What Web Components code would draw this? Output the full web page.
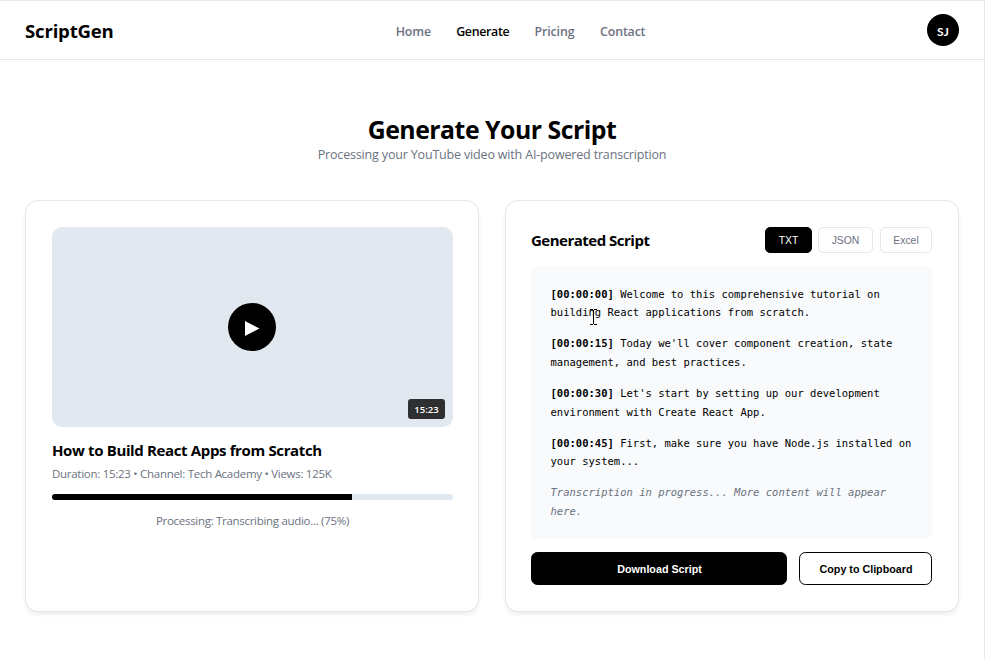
<!DOCTYPE html>
<html lang="en">
<head>
<meta charset="utf-8">
<title>ScriptGen</title>
<style>
html,body{margin:0;height:100%}
body{background:#fff;color:#000;font-family:"Open Sans","Noto Sans",sans-serif;overflow:hidden}
</style>
</head>
<body>
<script-app></script-app>
<script>
const define = (name, html) => customElements.define(name, class extends HTMLElement {
  constructor() {
    super();
    const t = document.createElement('template');
    t.innerHTML = html;
    this.attachShadow({mode: 'open'}).append(t.content.cloneNode(true));
  }
});

define('nav-link', `<style>
:host{display:block;font-size:12.4px;font-weight:600;color:#6b7280;line-height:20px;white-space:nowrap}
:host([active]){color:#000}
</style><slot></slot>`);

define('user-avatar', `<style>
:host{display:flex;align-items:center;justify-content:center;box-sizing:border-box;width:32px;height:32px;padding-top:2px;border-radius:50%;background:#000;color:#fff;font:700 12px Lato,sans-serif}
</style><slot></slot>`);

define('site-header', `<style>
:host{display:flex;justify-content:space-between;align-items:center;box-sizing:border-box;height:59px;padding:0 25px;border-bottom:1px solid #e2e8f0}
.brand{width:189px;font-size:18.6px;font-weight:700;letter-spacing:-.2px;line-height:26px;padding-top:2px}
nav{display:flex;padding-top:4px}
.right{width:132px;display:flex;justify-content:flex-end}
</style>
<div class="brand">ScriptGen</div>
<nav><nav-link style="width:60.5px;letter-spacing:-.1px">Home</nav-link><nav-link active style="width:78.3px;letter-spacing:-.3px">Generate</nav-link><nav-link style="width:65.7px;letter-spacing:-.1px">Pricing</nav-link><nav-link style="letter-spacing:-.17px">Contact</nav-link></nav>
<div class="right"><user-avatar>SJ</user-avatar></div>`);

define('page-heading', `<style>
:host{display:block;text-align:center;padding-top:51px;height:89px}
h1{margin:0;font-size:24.8px;font-weight:700;letter-spacing:-.48px;line-height:36px}
p{margin:-1px 0 0;font-size:12.5px;letter-spacing:-.17px;line-height:18px;color:#6b7280}
</style><h1>Generate Your Script</h1><p>Processing your YouTube video with AI-powered transcription</p>`);

define('panel-card', `<style>
:host{display:block;box-sizing:border-box;height:412px;padding:26px 25px 26px 26px;border:1px solid #e2e8f0;border-radius:13px;background:#fff;box-shadow:0 3px 5px -1px rgba(0,0,0,.09)}
:host([flush-left]){padding:26px 26px 26px 25px}
</style><slot></slot>`);

define('video-thumb', `<style>
:host{display:grid;place-items:center;position:relative;height:200px;border-radius:10px;background:#e2e8f0}
.play{display:grid;place-items:center;width:48px;height:48px;margin-right:1px;border-radius:50%;background:#000}
.time{position:absolute;right:8px;bottom:8px;width:37px;height:20px;border-radius:3px;background:rgba(0,0,0,.8);color:#fff;font-size:9.5px;font-weight:600;line-height:21px;text-align:center}
</style>
<div class="play"><svg width="48" height="48"><path d="M17 18v15l14.5-7.5z" fill="#fff"/></svg></div>
<div class="time"><slot></slot></div>`);

define('progress-bar', `<style>
:host{display:block;height:6px;border-radius:3px;background:#e2e8f0;overflow:hidden}
div{width:300px;height:100%;background:#000}
</style><div></div>`);

define('video-panel', `<style>
h2{margin:12px 0 0;font-size:15px;font-weight:700;letter-spacing:-.36px;line-height:22px}
.meta,.status{font-size:11.5px;line-height:18px;color:#6b7280}
.meta{letter-spacing:-.28px;margin:4px 0 11px}
.status{letter-spacing:-.3px;text-align:center;margin-top:12px}
</style>
<panel-card><video-thumb>15:23</video-thumb>
<h2>How to Build React Apps from Scratch</h2>
<div class="meta">Duration: 15:23 • Channel: Tech Academy • Views: 125K</div>
<progress-bar></progress-bar>
<div class="status">Processing: Transcribing audio... (75%)</div></panel-card>`);

define('format-tab', `<style>
:host{display:grid;place-items:center;box-sizing:border-box;height:26px;border:1px solid #e2e8f0;border-radius:5px;color:#6b7280;font:10.4px "Liberation Sans",sans-serif}
:host([active]){background:#000;border-color:#000;color:#fff}
</style><slot></slot>`);

define('action-button', `<style>
:host{display:grid;place-items:center;box-sizing:border-box;height:33px;padding:1px 0 0 1px;border:1px solid #000;border-radius:6.4px;font:700 10.72px "Liberation Sans",sans-serif}
:host([primary]){background:#000;color:#fff}
</style><slot></slot>`);

define('script-line', `<style>
:host{display:block;margin-bottom:12.8px}
:host(:last-child){margin-bottom:0;color:#6b7280;font-style:italic}
</style><slot name="time"></slot><slot></slot>`);

define('text-cursor', `<style>
:host{position:absolute;left:59px;top:43px;width:7px;height:16px}
svg{display:block}
</style><svg width="7" height="16"><path d="M0 .5h3M4 .5h3M3.5 1v14M0 15.5h3M4 15.5h3" fill="none" stroke="#000" shape-rendering="crispEdges"/></svg>`);

define('script-panel', `<style>
.head{display:flex;align-items:center;justify-content:space-between;height:26px}
h2{margin:0 0 1px;font-size:15px;font-weight:700;letter-spacing:-.5px;line-height:22px}
.tabs{display:flex}
.code{position:relative;box-sizing:border-box;height:273px;margin-top:13px;padding:18.8px 19.2px 19.2px 19.5px;border-radius:6.4px;background:#f8fafc;font:10.53px/18.43px "DejaVu Sans Mono",monospace;white-space:nowrap}
.actions{display:grid;grid-template-columns:1fr 133px;gap:12px;margin-top:13px}
</style>
<panel-card flush-left>
<div class="head"><h2>Generated Script</h2><div class="tabs"><format-tab active style="width:47px;margin-right:6px">TXT</format-tab><format-tab style="width:55px;margin-right:7px">JSON</format-tab><format-tab style="width:52px">Excel</format-tab></div></div>
<div class="code"><text-cursor></text-cursor>
<script-line><b slot="time">[00:00:00]</b> Welcome to this comprehensive tutorial on<br>building React applications from scratch.</script-line>
<script-line><b slot="time">[00:00:15]</b> Today we'll cover component creation, state<br>management, and best practices.</script-line>
<script-line><b slot="time">[00:00:30]</b> Let's start by setting up our development<br>environment with Create React App.</script-line>
<script-line><b slot="time">[00:00:45]</b> First, make sure you have Node.js installed on<br>your system...</script-line>
<script-line>Transcription in progress... More content will appear<br>here.</script-line></div>
<div class="actions"><action-button primary>Download Script</action-button><action-button>Copy to Clipboard</action-button></div>
</panel-card>`);

define('script-app', `<style>
:host{display:block;box-sizing:border-box;width:985px;height:659px;border:1px solid #e2e8f0;border-width:1px 1px 0 0}
main{display:grid;grid-template-columns:454px 454px;gap:26px;padding:0 25px}
</style>
<site-header></site-header><page-heading></page-heading>
<main><video-panel></video-panel><script-panel></script-panel></main>`);
</script>
</body>
</html>
